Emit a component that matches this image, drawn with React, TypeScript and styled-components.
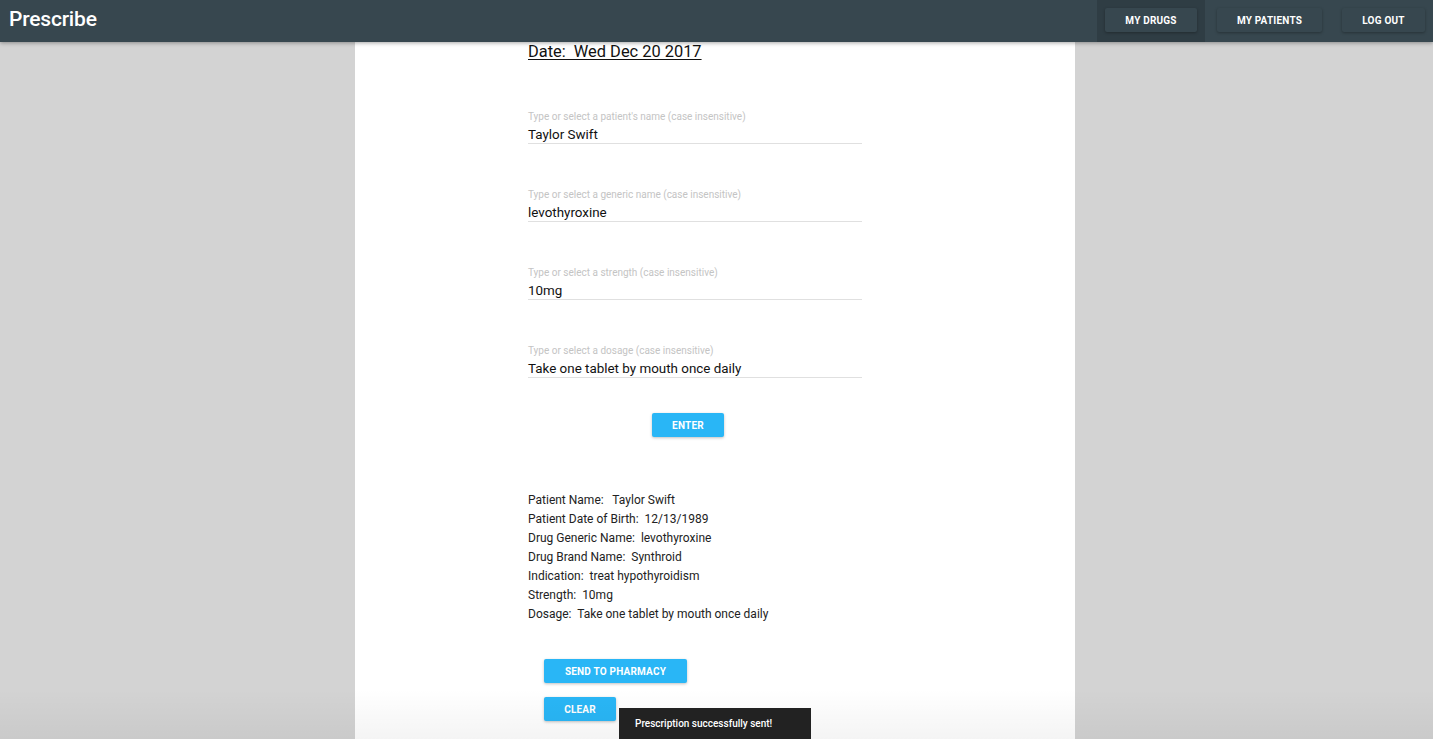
import * as React from 'react';
import styled, { createGlobalStyle } from 'styled-components';

const GlobalStyle = createGlobalStyle`
	html, body {
		margin: 0;
		padding: 0;
		height: 100%;
		background: #d3d3d3;
		font-family: Roboto, "Liberation Sans", sans-serif;
		overflow: hidden;
	}
`;

const Page = styled.div`
	height: 739px;
	display: flex;
	flex-direction: column;
	position: relative;
	overflow: hidden;
`;

const AppBar = styled.header`
	height: 42px;
	flex: none;
	background: #37474f;
	display: flex;
	align-items: stretch;
	justify-content: space-between;
	box-shadow: 0 1px 4px rgba(0, 0, 0, 0.35);
	position: relative;
	z-index: 2;
`;

const Title = styled.h1`
	margin: 0;
	padding: 0 0 0 9px;
	color: #fff;
	font-size: 21px;
	font-weight: 500;
	line-height: 38px;
	letter-spacing: -0.2px;
`;

const Nav = styled.nav`
	display: flex;
	align-items: flex-start;
`;

const NavSlot = styled.div<{ $active?: boolean; $pl: number }>`
	display: flex;
	height: 42px;
	padding: 8px 8px 0 ${p => p.$pl}px;
	box-sizing: border-box;
	background: ${p => (p.$active ? '#2f3d44' : 'transparent')};
`;

const NavButton = styled.button<{ $w: number }>`
	width: ${p => p.$w}px;
	height: 24px;
	border: 0;
	border-radius: 2px;
	background: #37474f;
	color: #fff;
	font-family: inherit;
	font-size: 10px;
	font-weight: 700;
	letter-spacing: 0.2px;
	box-shadow: 0 1px 3px rgba(0, 0, 0, 0.3);
	padding: 0;
`;

const Body = styled.main`
	flex: 1;
	display: flex;
	justify-content: center;
	margin-left: -3px;
`;

const Card = styled.section`
	width: 720px;
	background: #fff;
	display: flex;
	justify-content: center;
`;

const Column = styled.div`
	width: 334px;
	margin-left: -40px;
	display: flex;
	flex-direction: column;
`;

const DateLine = styled.div`
	font-size: 16.4px;
	color: #111;
	text-decoration: underline;
	text-underline-offset: 2px;
	white-space: pre;
	line-height: 20px;
`;

const Field = styled.div`
	margin-top: 49px;
	display: flex;
	flex-direction: column;
	border-bottom: 1px solid #e0e0e0;
	& + & {
		margin-top: 45px;
	}
`;

const FieldLabel = styled.label`
	font-size: 10px;
	color: #c4c4c4;
	line-height: 12px;
`;

const FieldValue = styled.div`
	font-size: 13.4px;
	color: #111;
	line-height: 18px;
	margin-top: 3px;
	margin-bottom: -1px;
`;

const ActionRow = styled.div`
	display: flex;
	justify-content: center;
	margin-top: 35px;
	margin-left: -14px;
`;

const Primary = styled.button<{ $w: number }>`
	width: ${p => p.$w}px;
	height: 24px;
	border: 0;
	border-radius: 2px;
	background: #29b6f6;
	color: #fff;
	font-family: inherit;
	font-size: 10px;
	font-weight: 700;
	letter-spacing: 0.2px;
	box-shadow: 0 1px 3px rgba(0, 0, 0, 0.25);
	padding: 0;
`;

const Summary = styled.div`
	margin-top: 54px;
	display: flex;
	flex-direction: column;
`;

const SummaryLine = styled.div`
	font-size: 12px;
	line-height: 19px;
	color: #222;
	white-space: pre;
`;

const Buttons = styled.div`
	margin-top: 35px;
	padding-left: 16px;
	display: flex;
	flex-direction: column;
	align-items: flex-start;
	gap: 14px;
`;

const Fade = styled.div`
	position: absolute;
	left: 0;
	right: 0;
	bottom: 0;
	height: 50px;
	background: linear-gradient(rgba(0, 0, 0, 0), rgba(0, 0, 0, 0.045));
	pointer-events: none;
`;

const Snackbar = styled.div`
	position: absolute;
	left: 619px;
	top: 708px;
	width: 192px;
	height: 40px;
	background: #222;
	color: #fff;
	font-size: 10px;
	font-weight: 500;
	padding: 10px 0 0 16px;
	box-sizing: border-box;
	z-index: 3;
`;

const fields = [
	{ label: "Type or select a patient's name (case insensitive)", value: 'Taylor Swift' },
	{ label: 'Type or select a generic name (case insensitive)', value: 'levothyroxine' },
	{ label: 'Type or select a strength (case insensitive)', value: '10mg' },
	{ label: 'Type or select a dosage (case insensitive)', value: 'Take one tablet by mouth once daily' },
];

const summary = [
	'Patient Name:   Taylor Swift',
	'Patient Date of Birth:  12/13/1989',
	'Drug Generic Name:  levothyroxine',
	'Drug Brand Name:  Synthroid',
	'Indication:  treat hypothyroidism',
	'Strength:  10mg',
	'Dosage:  Take one tablet by mouth once daily',
];

const App = () => (
	<Page>
		<GlobalStyle />
		<AppBar>
			<Title>Prescribe</Title>
			<Nav>
				<NavSlot $active $pl={8}><NavButton $w={92}>MY DRUGS</NavButton></NavSlot>
				<NavSlot $pl={12}><NavButton $w={105}>MY PATIENTS</NavButton></NavSlot>
				<NavSlot $pl={12}><NavButton $w={83}>LOG OUT</NavButton></NavSlot>
			</Nav>
		</AppBar>
		<Body>
			<Card>
				<Column>
					<DateLine>{'Date:  Wed Dec 20 2017'}</DateLine>
					{fields.map(f => (
						<Field key={f.label}>
							<FieldLabel>{f.label}</FieldLabel>
							<FieldValue>{f.value}</FieldValue>
						</Field>
					))}
					<ActionRow>
						<Primary $w={72}>ENTER</Primary>
					</ActionRow>
					<Summary>
						{summary.map(s => <SummaryLine key={s}>{s}</SummaryLine>)}
					</Summary>
					<Buttons>
						<Primary $w={143}>SEND TO PHARMACY</Primary>
						<Primary $w={72}>CLEAR</Primary>
					</Buttons>
				</Column>
			</Card>
		</Body>
		<Fade />
		<Snackbar>Prescription successfully sent!</Snackbar>
	</Page>
);

export default App;
